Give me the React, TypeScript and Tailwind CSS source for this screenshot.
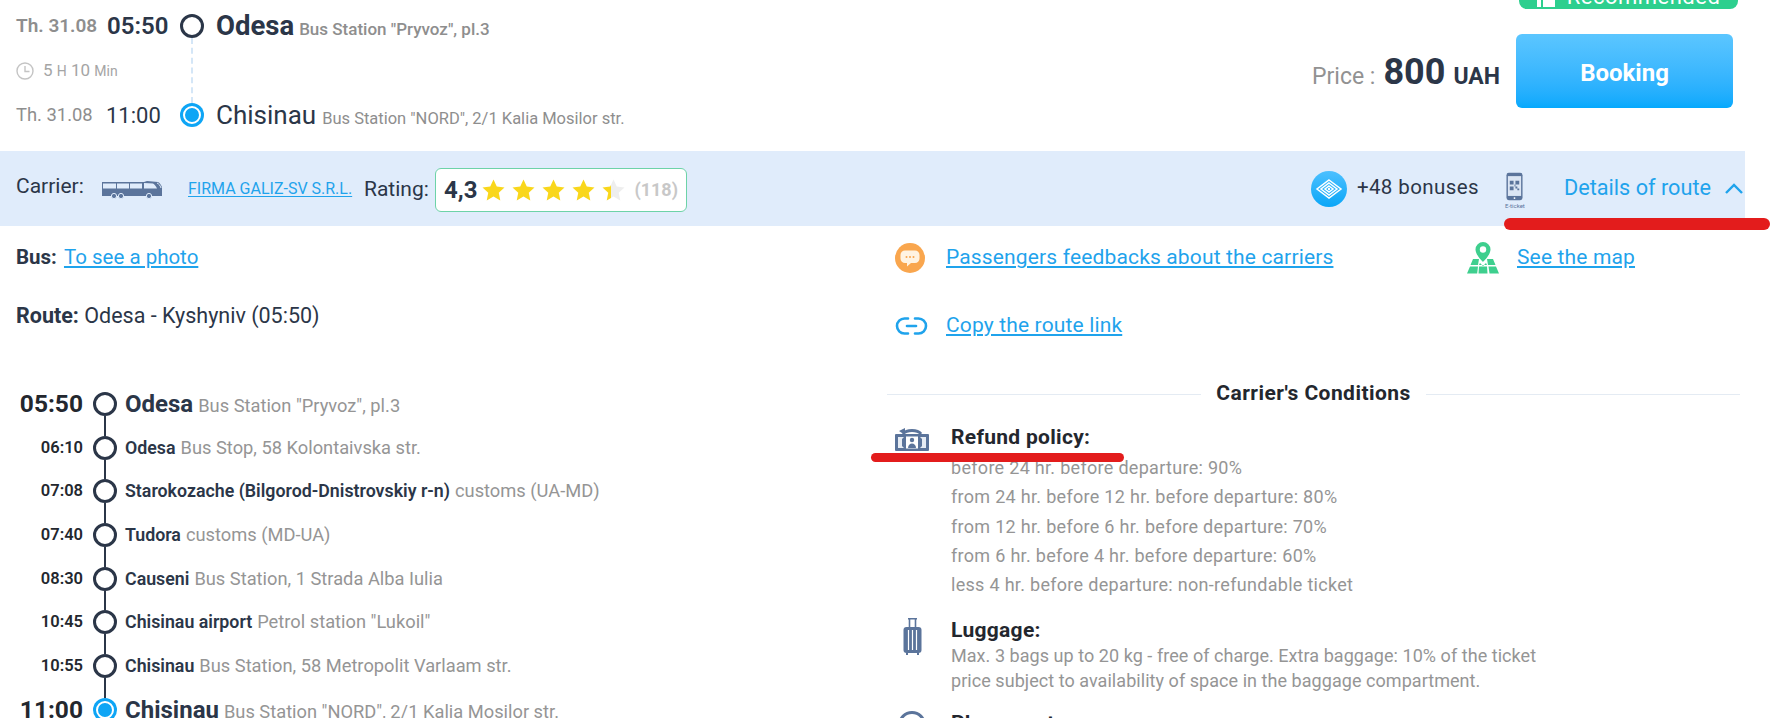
import type { ReactNode } from "react";

const timeline = [
  { time: "05:50", name: "Odesa", place: 'Bus Station "Pryvoz", pl.3', main: true },
  { time: "06:10", name: "Odesa", place: "Bus Stop, 58 Kolontaivska str." },
  { time: "07:08", name: "Starokozache (Bilgorod-Dnistrovskiy r-n)", place: "customs (UA-MD)" },
  { time: "07:40", name: "Tudora", place: "customs (MD-UA)" },
  { time: "08:30", name: "Causeni", place: "Bus Station, 1 Strada Alba Iulia" },
  { time: "10:45", name: "Chisinau airport", place: 'Petrol station "Lukoil"' },
  { time: "10:55", name: "Chisinau", place: "Bus Station, 58 Metropolit Varlaam str." },
  { time: "11:00", name: "Chisinau", place: 'Bus Station "NORD", 2/1 Kalia Mosilor str.', main: true, last: true },
];

const refundRules = [
  "before 24 hr. before departure: 90%",
  "from 24 hr. before 12 hr. before departure: 80%",
  "from 12 hr. before 6 hr. before departure: 70%",
  "from 6 hr. before 4 hr. before departure: 60%",
  "less 4 hr. before departure: non-refundable ticket",
];

const linkCls = "text-[#1fa3ec] underline underline-offset-2";

function Star({ half = false }: { half?: boolean }) {
  return (
    <svg viewBox="0 0 24 23" className="w-[23px] h-[22px] shrink-0">
      {half && (
        <defs>
          <linearGradient id="half-star">
            <stop offset="38%" stopColor="#f9d71c" />
            <stop offset="38%" stopColor="#eeeeee" />
          </linearGradient>
        </defs>
      )}
      <path
        d="M12 0.5l3.4 7.4 8.1 1-6 5.5 1.6 8-7.1-4-7.1 4 1.6-8-6-5.5 8.1-1z"
        fill={half ? "url(#half-star)" : "#f9d71c"}
      />
    </svg>
  );
}

function BusIcon() {
  return (
    <svg viewBox="0 0 62 20" className="w-[62px] h-[20px] shrink-0">
      <path d="M1 3h42l3-1 11 1c2 1 4 4 4 6v8H1z" fill="#5b749b" />
      <path d="M2 4.5h13v5H2zM16 4.5h12v5H16zM29 4.5h12v5H29z" fill="#e0ecfb" />
      <path d="M43 4l9 .5c2 1 3 3 4 5H43z" fill="#e0ecfb" />
      <path d="M56 4c2 1 3 2 4 5" stroke="#e0ecfb" strokeWidth="1" fill="none" />
      <circle cx="13" cy="17" r="2.6" fill="#5b749b" stroke="#e0ecfb" />
      <circle cx="20" cy="17" r="2.6" fill="#5b749b" stroke="#e0ecfb" />
      <circle cx="48" cy="17" r="2.6" fill="#5b749b" stroke="#e0ecfb" />
    </svg>
  );
}

function BonusIcon() {
  return (
    <svg viewBox="0 0 36 36" className="w-9 h-9 shrink-0">
      <defs>
        <linearGradient id="bonus-bg" x1="0" y1="0" x2="0" y2="1">
          <stop offset="0%" stopColor="#4cc0ff" />
          <stop offset="100%" stopColor="#0aa6f7" />
        </linearGradient>
      </defs>
      <circle cx="18" cy="18" r="18" fill="url(#bonus-bg)" />
      <g fill="none" stroke="#fff" strokeWidth="1.5">
        <path d="M18 9l12 9-12 9L6 18z" />
        <path d="M18 12l8 6-8 6-8-6z" />
        <path d="M18 15l4 3-4 3-4-3z" />
      </g>
      <circle cx="18" cy="18" r="1.2" fill="#fff" />
    </svg>
  );
}

function PhoneIcon() {
  return (
    <div className="flex flex-col items-center w-[22px]">
      <svg viewBox="0 0 18 30" className="w-[17px] h-[29px]">
        <rect x="0.5" y="0.5" width="17" height="29" rx="2.5" fill="#5b749b" />
        <rect x="2" y="4" width="14" height="21" fill="#dbe5f3" />
        <path
          d="M4 9h4v4H4zM10 9h4v4h-4zM4 15h4v4H4zM10 15h2v2h-2zM12 17h2v2h-2zM9 13h1v2H9z"
          fill="#5b749b"
        />
        <circle cx="9" cy="27.3" r="1" fill="#fff" />
      </svg>
      <span className="text-[6px] leading-[8px] mt-[1px] text-[#5b749b] whitespace-nowrap">E-ticket</span>
    </div>
  );
}

function FeedbackIcon() {
  return (
    <svg viewBox="0 0 30 30" className="w-[30px] h-[30px] shrink-0">
      <circle cx="15" cy="15" r="15" fill="#f9a64e" />
      <path d="M10 7.5h10a4.500 4.500 0 014.500 4.500v3.500a4.500 4.500 0 01-4.500 4.500h-4l-4 3.500v-3.500h-2a4.500 4.500 0 01-4.500-4.500V12A4.500 4.500 0 0110 7.500z" fill="#fff3e2" />
      <circle cx="11.5" cy="14" r="1" fill="#f9a64e" />
      <circle cx="15" cy="14" r="1" fill="#f9a64e" />
      <circle cx="18.5" cy="14" r="1" fill="#f9a64e" />
    </svg>
  );
}

function LinkIcon() {
  return (
    <svg viewBox="0 0 33 20" className="w-[33px] h-[20px] shrink-0" fill="none" stroke="#1fa3ec" strokeWidth="2.6" strokeLinecap="round">
      <path d="M13 2.5H9.5a7.500 7.500 0 000 15H13" />
      <path d="M20 2.5h3.500a7.500 7.500 0 010 15H20" />
      <path d="M12 10h9" />
    </svg>
  );
}

function MapIcon() {
  return (
    <svg viewBox="0 0 34 32" className="w-[34px] h-[32px] shrink-0">
      <path d="M17 0a7.500 7.500 0 00-7.500 7.500C9.500 13 17 20 17 20s7.500-7 7.500-12.500A7.500 7.500 0 0017 0z" fill="#3ecf8e" />
      <circle cx="17" cy="7.5" r="3.2" fill="#fff" />
      <path
        d="M7 17h6l-1 6H4.500zM21 17h6l2.500 6H22zM14 21l3 3 3-3 1 2H13zM4 24.500h8l-.8 7H1zM13 24.500h8l.5 7h-9zM22.500 24.500H30l3 7H23.500z"
        fill="#3ecf8e"
      />
    </svg>
  );
}

function RefundIcon() {
  return (
    <svg viewBox="0 0 34 26" className="w-[34px] h-[26px] mt-[2px] shrink-0">
      <path d="M8 7a10 6 0 0118 0" fill="none" stroke="#5b749b" strokeWidth="3" />
      <path d="M4 4l6-3v7z" fill="#5b749b" />
      <path d="M1 7h32a1 1 0 011 1v15a1 1 0 01-1 1H1a1 1 0 01-1-1V8a1 1 0 011-1z" fill="#5b749b" />
      <path d="M3 10h6l-2 2v7l2 2H3zM31 10h-6l2 2v7l-2 2h6z" fill="#e6ecf4" />
      <path d="M11 9.500h12v12H11z" fill="#fff" />
      <circle cx="17" cy="13" r="2.2" fill="#5b749b" />
      <path d="M13 21c0-3 2-4.500 4-4.500s4 1.500 4 4.500z" fill="#5b749b" />
    </svg>
  );
}

function LuggageIcon() {
  return (
    <svg viewBox="0 0 19 37" className="w-[19px] h-[37px] shrink-0">
      <path d="M5 0.8h9M6.5 1v9M12.500 1v9" stroke="#5b749b" strokeWidth="1.6" fill="none" />
      <rect x="0.5" y="9" width="18" height="26" rx="3" fill="#5b749b" />
      <path d="M5.500 12v20M9.500 12v20M13.500 12v20" stroke="#fff" strokeWidth="1.2" />
      <path d="M4 35v2M15 35v2" stroke="#5b749b" strokeWidth="2" />
    </svg>
  );
}

function Dot({ active = false }: { active?: boolean }) {
  if (active) {
    return (
      <div className="w-6 h-6 rounded-full bg-[#0ea5f5] p-[3px] shrink-0">
        <div className="w-full h-full rounded-full border-[2px] border-white bg-[#0ea5f5]" />
      </div>
    );
  }
  return <div className="w-6 h-6 rounded-full border-[3px] border-[#2b3648] bg-white shrink-0" />;
}

function Condition({
  icon,
  title,
  className,
  children,
}: {
  icon: ReactNode;
  title: string;
  className?: string;
  children?: ReactNode;
}) {
  return (
    <div className={`flex ${className ?? ""}`}>
      <div className="w-[64px] pl-2 pr-[22px] flex justify-center items-start shrink-0">{icon}</div>
      <div className="flex-1">
        <div className="text-[21px] leading-6 font-bold tracking-[0.3px] text-[#23272e]">{title}</div>
        {children}
      </div>
    </div>
  );
}

export default function App() {
  return (
    <div className="relative w-[1770px] h-[718px] overflow-hidden bg-white font-['Roboto',sans-serif] text-[#2b3648]">
      {/* ── Trip summary ── */}
      <div className="relative h-[151px] flex justify-between pl-4 pr-[37px]">
        <div className="flex pt-[14px] h-[127px]">
          <div className="w-[162px] flex flex-col justify-between">
            <div className="flex items-center h-6 whitespace-nowrap">
              <span className="w-[91px] text-[19px] font-semibold text-[#8e8e8e]">Th. 31.08</span>
              <span className="text-[24px] font-semibold">05:50</span>
            </div>
            <div className="flex items-center gap-[9px] text-[#a5a5a5] text-[17px]">
              <svg viewBox="0 0 18 18" className="w-[18px] h-[18px]" fill="none" stroke="#c4c4c4" strokeWidth="1.4">
                <circle cx="9" cy="9" r="8" />
                <path d="M9 4v5.500h4.500" />
              </svg>
              <span>
                5 <span className="text-[14px]">H</span> 10 <span className="text-[14px]">Min</span>
              </span>
            </div>
            <div className="flex items-center h-6 whitespace-nowrap">
              <span className="w-[90px] text-[18.4px] text-[#8e8e8e]">Th. 31.08</span>
              <span className="text-[22px]">11:00</span>
            </div>
          </div>
          <div className="w-[25px] ml-[1px] flex flex-col items-center justify-between">
            <Dot />
            <div className="flex-1 border-l-2 border-dashed border-[#d4e6f7]" />
            <Dot active />
          </div>
          <div className="pl-[12px] flex flex-col justify-between whitespace-nowrap">
            <div className="flex items-baseline gap-[5px] h-6 leading-6">
              <span className="text-[27.5px] font-bold">Odesa</span>
              <span className="text-[17px] font-medium text-[#8e8e8e]">Bus Station "Pryvoz", pl.3</span>
            </div>
            <div className="flex items-baseline gap-[6px] h-6 leading-6">
              <span className="text-[26px]">Chisinau</span>
              <span className="text-[16.5px] text-[#8e8e8e]">Bus Station "NORD", 2/1 Kalia Mosilor str.</span>
            </div>
          </div>
        </div>

        <div className="flex items-start pt-[34px] gap-4">
          <div className="flex items-baseline h-[74px] pt-[20px] whitespace-nowrap">
            <span className="text-[23px] text-[#929292]">Price :</span>
            <span className="text-[36px] font-bold ml-2 leading-none">800</span>
            <span className="text-[23px] font-bold ml-2">UAH</span>
          </div>
          <button className="w-[217px] h-[74px] pt-[3px] rounded-md bg-gradient-to-b from-[#5bc6ff] to-[#03a9fd] text-white text-[24px] font-bold">
            Booking
          </button>
        </div>

        <div className="absolute top-[-21px] right-[32px] w-[219px] h-[30px] pt-[6px] rounded-b-lg bg-[#2dcf8e] text-white flex justify-center items-center gap-[12px]">
          <svg viewBox="0 0 18 18" className="w-[18px] h-[18px] mt-[2px] shrink-0" fill="#fff">
            <path d="M0 7h4v11H0zM6 7l3-7c2 0 3 1 3 3v3h6v12H6z" />
          </svg>
          <span className="text-[22px] leading-[30px] tracking-[0.5px]">Recommended</span>
        </div>
      </div>

      {/* ── Carrier bar ── */}
      <div className="w-[1745px] h-[75px] bg-[#e0ecfb] flex items-center pl-4 whitespace-nowrap">
        <span className="text-[21px] w-[85px] -mt-[3px]">Carrier:</span>
        <BusIcon />
        <a className={`${linkCls} text-[16px] ml-[25px] w-[176px]`}>FIRMA GALIZ-SV S.R.L.</a>
        <span className="text-[21px] w-[71px] mt-[2px]">Rating:</span>
        <div className="w-[252px] h-[44px] mt-[2px] flex items-center bg-white border border-[#6dd3a8] rounded-md pl-2 pr-2">
          <span className="text-[24px] font-bold w-[41px]">4,3</span>
          <div className="flex gap-[7px]">
            <Star />
            <Star />
            <Star />
            <Star />
            <Star half />
          </div>
          <span className="ml-[9px] text-[18px] font-bold text-[#c8c8c8]">(118)</span>
        </div>

        <div className="ml-auto flex items-center">
          <BonusIcon />
          <span className="ml-[10px] text-[20.5px] tracking-[0.4px] w-[147px] -mt-[2px]">+48 bonuses</span>
          <div className="pt-1">
            <PhoneIcon />
          </div>
          <span className="ml-[38px] text-[21.7px] text-[#1fa3ec]">Details of route</span>
          <svg viewBox="0 0 18 11" className="w-[18px] h-[11px] ml-[14px] mr-[2px]" fill="none" stroke="#1fa3ec" strokeWidth="2.4">
            <path d="M1 10l8-8 8 8" />
          </svg>
        </div>
      </div>

      {/* ── Route details ── */}
      <div className="flex">
        <div className="w-[887px] pl-4 pt-[19px]">
          <div className="text-[20.5px] leading-6">
            <span className="font-bold">Bus:</span> <a className={`${linkCls} ml-[2px]`}>To see a photo</a>
          </div>
          <div className="text-[21.5px] leading-6 mt-[35px]">
            <span className="font-bold">Route:</span> Odesa - Kyshyniv (05:50)
          </div>

          <div className="mt-[64px] -ml-4">
            {timeline.map((stop, i) => (
              <div key={i} className="flex h-[43.7px] whitespace-nowrap">
                <div className={`w-[83px] text-right leading-6 text-[#23272e] ${stop.main ? "text-[24.5px] font-bold" : "text-[16.5px] font-semibold"}`}>
                  {stop.time}
                </div>
                <div className="w-[24px] ml-[10px] flex flex-col items-center">
                  <Dot active={stop.last} />
                  {!stop.last && <div className="flex-1 w-[2.5px] bg-[#2b3648]" />}
                </div>
                <div className="pl-[8px] flex items-baseline gap-[5px] leading-6">
                  <span className={stop.main ? "text-[24px] font-bold" : "text-[17.8px] font-semibold"}>{stop.name}</span>
                  <span className="text-[18.3px] text-[#959595]">{stop.place}</span>
                </div>
              </div>
            ))}
          </div>
        </div>

        <div className="w-[853px] pt-[17px]">
          <div className="flex items-center h-[30px] pl-2 text-[21px] tracking-[0.15px] whitespace-nowrap">
            <div className="w-[571px] flex items-center">
              <FeedbackIcon />
              <a className={`${linkCls} ml-[21px]`}>Passengers feedbacks about the carriers</a>
            </div>
            <MapIcon />
            <a className={`${linkCls} ml-[17px]`}>See the map</a>
          </div>
          <div className="flex items-center h-[30px] pl-2 text-[21px] tracking-[0.15px] mt-[38px]">
            <LinkIcon />
            <a className={`${linkCls} ml-[18px]`}>Copy the route link</a>
          </div>

          <div className="flex items-center h-6 mt-[41px] gap-[15px]">
            <div className="flex-1 h-px bg-[#e4ebf3]" />
            <span className="text-[21px] font-bold tracking-[0.45px] text-[#23272e]">Carrier's Conditions</span>
            <div className="flex-1 h-px bg-[#e4ebf3]" />
          </div>

          <Condition icon={<RefundIcon />} title="Refund policy:" className="mt-[19px]">
            <div className="mt-[4px] text-[18px] tracking-[0.3px] leading-[29.3px] text-[#959595]">
              {refundRules.map((rule) => (
                <div key={rule}>{rule}</div>
              ))}
            </div>
          </Condition>

          <Condition icon={<LuggageIcon />} title="Luggage:" className="mt-[19px]">
            <p className="mt-[1px] text-[18px] tracking-[0.05px] leading-[25px] text-[#959595] w-[600px]">
              Max. 3 bags up to 20 kg - free of charge. Extra baggage: 10% of the ticket price subject to availability of space in the baggage compartment.
            </p>
          </Condition>

          <Condition
            icon={
              <svg viewBox="0 0 28 28" className="w-7 h-7" fill="none" stroke="#5b749b" strokeWidth="3">
                <circle cx="14" cy="14" r="12.5" />
              </svg>
            }
            title="Placement:"
            className="mt-[18px]"
          />
        </div>
      </div>

      {/* ── Red marker strokes drawn over the screenshot ── */}
      <div className="absolute left-[1504px] top-[218px] w-[266px] h-[12px] rounded-full bg-[#e31c1c]" />
      <div className="absolute left-[871px] top-[453px] w-[253px] h-[9px] rounded-full bg-[#e31c1c]" />
    </div>
  );
}
